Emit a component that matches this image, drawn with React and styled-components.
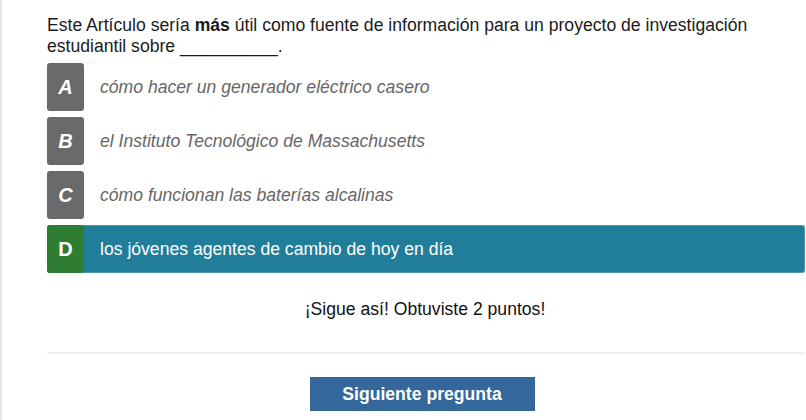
import React from "react";
import styled, { createGlobalStyle } from "styled-components";

const Global = createGlobalStyle`
  html, body { margin: 0; padding: 0; background: #fff; }
  body { font-family: "Liberation Sans", Arial, sans-serif; }
`;

const Page = styled.div`
  width: 806px;
  height: 420px;
  box-sizing: border-box;
  border-left: 1px solid #e2e2e2;
  box-shadow: inset 2px 0 2px -1px #eeeeee;
  padding: 15px 1px 0 46px;
  overflow: hidden;
`;

const Question = styled.p`
  margin: 0 0 6px;
  font-size: 17.6px;
  line-height: 21px;
  color: #1b1b1b;
  b { font-weight: bold; }
`;

const Options = styled.div`
  display: flex;
  flex-direction: column;
  gap: 6px;
`;

const Option = styled.div`
  display: flex;
  align-items: center;
  height: 48px;
  box-sizing: border-box;
  background: ${(p) => (p.$selected ? "#217e9a" : "transparent")};
  border: ${(p) => (p.$selected ? "1px solid #4d9ab3" : "none")};
  border-left: none;
  border-radius: 3px;
`;

const Letter = styled.div`
  flex: none;
  width: 37px;
  height: 48px;
  margin-top: ${(p) => (p.$selected ? "-1px" : "0")};
  margin-bottom: ${(p) => (p.$selected ? "-1px" : "0")};
  box-sizing: border-box;
  display: flex;
  align-items: center;
  justify-content: center;
  background: ${(p) => (p.$selected ? "#2e7d32" : "#6a6a6a")};
  border-radius: 3px;
  color: #fff;
  font-weight: bold;
  font-style: ${(p) => (p.$selected ? "normal" : "italic")};
  font-size: 20px;
`;

const OptionText = styled.span`
  margin-left: 16px;
  font-size: 17.6px;
  font-style: ${(p) => (p.$selected ? "normal" : "italic")};
  color: ${(p) => (p.$selected ? "#ffffff" : "#666666")};
`;

const Feedback = styled.div`
  margin-top: 26px;
  text-align: center;
  font-size: 17.6px;
  line-height: 21px;
  color: #111;
  padding-right: 2px;
`;

const Divider = styled.hr`
  margin: 32px 0 0;
  border: none;
  border-top: 2px solid #eeeeee;
`;

const Footer = styled.div`
  display: flex;
  justify-content: center;
  padding-top: 23px;
  padding-right: 8px;
`;

const NextButton = styled.button`
  width: 225px;
  height: 34px;
  padding: 0;
  border: none;
  border-radius: 0;
  background: #34679a;
  color: #fff;
  font-family: "Liberation Sans", Arial, sans-serif;
  font-weight: bold;
  font-size: 17.6px;
  cursor: pointer;
`;

const options = [
  { letter: "A", text: "cómo hacer un generador eléctrico casero" },
  { letter: "B", text: "el Instituto Tecnológico de Massachusetts" },
  { letter: "C", text: "cómo funcionan las baterías alcalinas" },
  { letter: "D", text: "los jóvenes agentes de cambio de hoy en día", selected: true },
];

export default function App() {
  return (
    <>
      <Global />
      <Page>
        <Question>
          Este Artículo sería <b>más</b> útil como fuente de información para un proyecto de investigación
          estudiantil sobre __________.
        </Question>
        <Options>
          {options.map((o) => (
            <Option key={o.letter} $selected={o.selected}>
              <Letter $selected={o.selected}>{o.letter}</Letter>
              <OptionText $selected={o.selected}>{o.text}</OptionText>
            </Option>
          ))}
        </Options>
        <Feedback>¡Sigue así! Obtuviste 2 puntos!</Feedback>
        <Divider />
        <Footer>
          <NextButton>Siguiente pregunta</NextButton>
        </Footer>
      </Page>
    </>
  );
}
